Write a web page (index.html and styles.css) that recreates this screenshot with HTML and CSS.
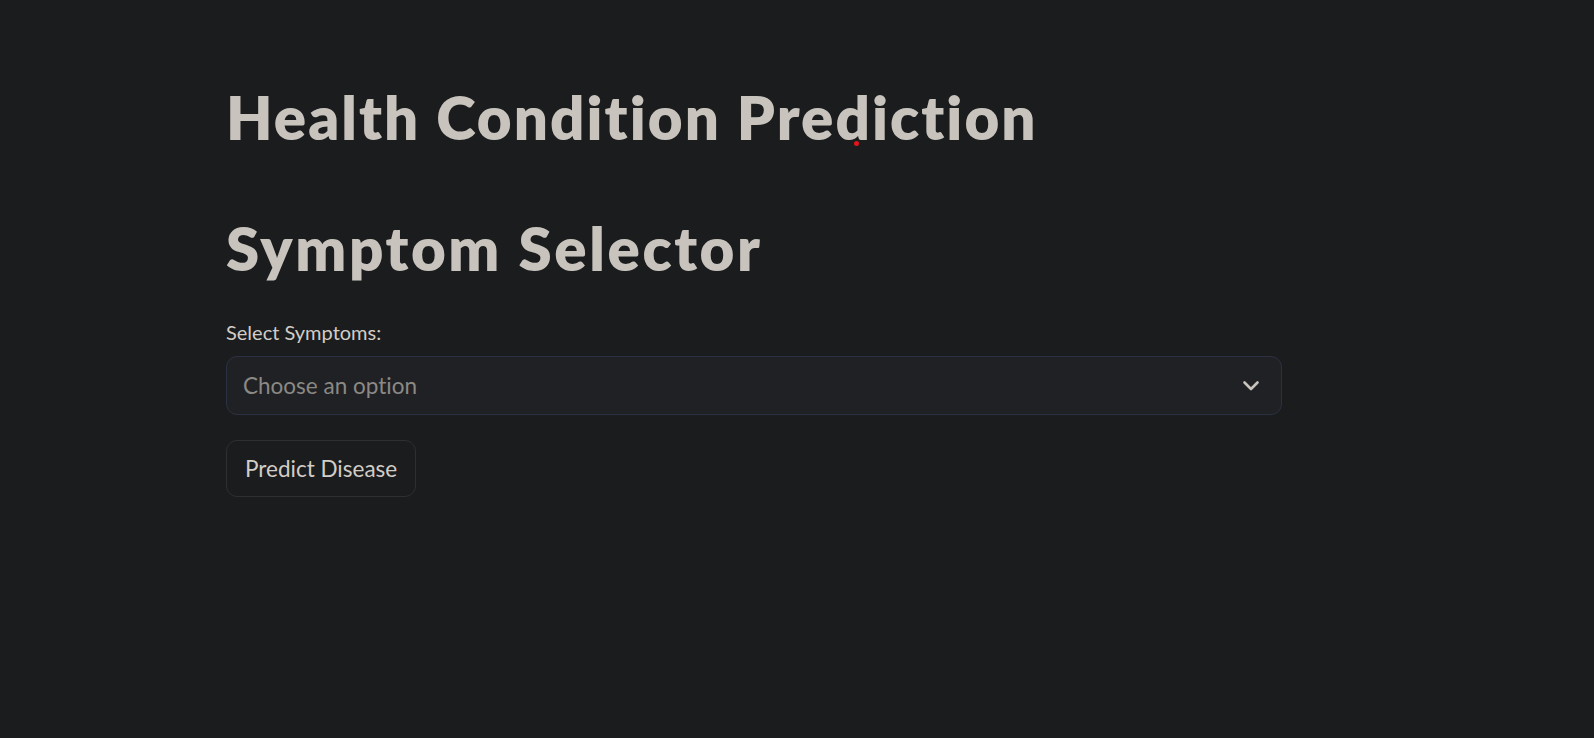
FILE: index.html
```html
<!DOCTYPE html>
<html lang="en">
<head>
<meta charset="utf-8">
<title>Health Condition Prediction</title>
<link rel="stylesheet" href="styles.css">
</head>
<body>
<main class="main">
  <h1 class="title">Health Condition Prediction</h1>
  <h2 class="subtitle">Symptom Selector</h2>
  <label class="field-label">Select Symptoms:</label>
  <div class="select">
    <span class="placeholder">Choose an option</span>
    <svg class="chevron" width="20" height="20" viewBox="0 0 20 20" aria-hidden="true">
      <polyline points="3.5,6.5 10,13 16.5,6.5" fill="none" stroke="currentColor" stroke-width="2.6" stroke-linecap="round" stroke-linejoin="round"/>
    </svg>
  </div>
  <button class="btn" type="button">Predict Disease</button>
</main>
<span class="dot"></span>
</body>
</html>
```
FILE: styles.css
```css
html, body {
  margin: 0;
  padding: 0;
}
body {
  background: #1b1c1e;
  color: #c8c4bd;
  font-family: Lato, "Noto Sans", sans-serif;
  font-variant-ligatures: none;
  width: 1594px;
  height: 738px;
  overflow: hidden;
  position: relative;
}
.main {
  display: flex;
  flex-direction: column;
  align-items: flex-start;
  width: 1056px;
  padding: 77px 0 0 226px;
}
.title, .subtitle {
  margin: 0;
  font-size: 60px;
  line-height: 80px;
  font-weight: 800;
  letter-spacing: 2.05px;
  color: #c8c4bd;
  white-space: nowrap;
}
.subtitle {
  margin-top: 51px;
  letter-spacing: 2.6px;
}
.field-label {
  margin-top: 29px;
  font-size: 20px;
  line-height: 30px;
  color: #d2cdc6;
}
.select {
  margin-top: 9px;
  box-sizing: border-box;
  width: 1056px;
  height: 59px;
  display: flex;
  align-items: center;
  justify-content: space-between;
  padding: 0 20px 0 16px;
  background: #202124;
  border: 1px solid #2b3142;
  border-radius: 11px;
}
.placeholder {
  font-size: 22.5px;
  color: #8b8984;
}
.chevron {
  color: #c8c4bd;
}
.btn {
  margin-top: 25px;
  box-sizing: border-box;
  height: 57px;
  padding: 0 18px;
  font-family: inherit;
  font-size: 22.5px;
  font-variant-ligatures: none;
  color: #d2cdc6;
  background: #1b1c1e;
  border: 1px solid #2e2f33;
  border-radius: 11px;
}
.dot {
  position: absolute;
  left: 854px;
  top: 141px;
  width: 5px;
  height: 5px;
  border-radius: 50%;
  background: #e0161c;
}
```
